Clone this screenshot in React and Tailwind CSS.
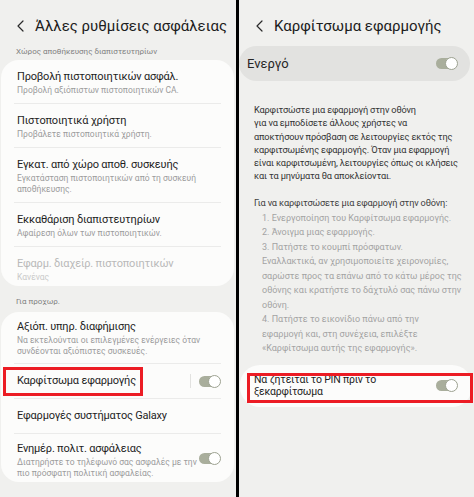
import React from 'react';

const Chevron = () => (
  <svg width="7" height="12" viewBox="0 0 7 12" fill="none">
    <path d="M6 1 L1 6 L6 11" stroke="#2a2a2a" strokeWidth="1.2" strokeLinecap="round" strokeLinejoin="round" />
  </svg>
);

const Toggle = () => (
  <div className="relative w-[22px] h-[13px] shrink-0">
    <div className="absolute left-0 top-[1px] w-[20px] h-[11px] rounded-full bg-[#a9ae9c]" />
    <div className="absolute right-0 top-0 w-[13px] h-[13px] rounded-full bg-white border border-[#9da291]" />
  </div>
);

const Item = ({ title, sub, disabled, pt = 'pt-[10px]', pb = 'pb-[7px]' }) => (
  <div className={`px-[16px] ${pt} ${pb} whitespace-nowrap`}>
    <div className={`text-[11px] tracking-[-0.2px] leading-[14px] ${disabled ? 'text-[#b9b9b9]' : 'text-[#1e1e1e]'}`}>{title}</div>
    {sub && (
      <div className={`mt-[1px] text-[8.5px] leading-[11px] ${disabled ? 'text-[#cacaca]' : 'text-[#9b9b9b]'}`}>{sub}</div>
    )}
  </div>
);

const Divider = () => <div className="mx-[13px] h-px bg-[#ebebea]" />;

export default function App() {
  return (
    <div className="w-[474px] h-[497px] flex bg-black font-['Roboto',sans-serif] overflow-hidden">

      {/* LEFT PANEL */}
      <div className="w-[236px] h-full bg-[#f0f0ee] flex flex-col">
        <div className="flex items-center h-[20px] mt-[16px] pl-[17px]">
          <Chevron />
          <span className="ml-[11px] text-[15px] leading-[20px] text-[#1c1c1c]">Άλλες ρυθμίσεις ασφάλειας</span>
        </div>

        <div className="mt-[10px] pl-[16px] text-[8px] leading-[12px] text-[#7f7f7f]">
          Χώρος αποθήκευσης διαπιστευτηρίων
        </div>

        <div className="mt-[2px] ml-[1px] mr-[2px] bg-[#fcfcfb] rounded-[18px]">
          <Item title="Προβολή πιστοποιητικών ασφάλ." sub="Προβολή αξιόπιστων πιστοποιητικών CA." />
          <Divider />
          <Item title="Πιστοποιητικά χρήστη" sub="Προβάλετε πιστοποιητικά χρήστη." />
          <Divider />
          <Item
            title="Εγκατ. από χώρο αποθ. συσκευής"
            sub={<>Εγκατάσταση πιστοποιητικών από τη συσκευή<br />αποθήκευσης.</>}
          />
          <Divider />
          <Item title="Εκκαθάριση διαπιστευτηρίων" sub="Αφαίρεση όλων των πιστοποιητικών." />
          <Divider />
          <Item title="Εφαρμ. διαχείρ. πιστοποιητικών" sub="Κανένας" disabled pb="pb-[3px]" />
        </div>

        <div className="mt-[10px] pl-[16px] text-[8px] leading-[12px] text-[#7f7f7f]">
          Για προχωρ.
        </div>

        <div className="mt-[4px] ml-[1px] mr-[2px] bg-[#fcfcfb] rounded-[18px]">
          <Item
            title="Αξιόπ. υπηρ. διαφήμισης"
            sub={<>Να εκτελούνται οι επιλεγμένες ενέργειες όταν<br />συνδέονται αξιόπιστες συσκευές.</>}
            pt="pt-[8px]"
            pb="pb-[6px]"
          />
          <Divider />
          <div className="relative flex items-center px-[16px] h-[34px]">
            <span className="flex-1 text-[11px] tracking-[-0.2px] leading-[14px] text-[#1e1e1e]">Καρφίτσωμα εφαρμογής</span>
            <div className="w-px h-[14px] bg-[#e2e2e0] mr-[8px]" />
            <div className="mr-[-3px]"><Toggle /></div>
            <div className="absolute left-[2px] top-[3px] w-[140px] h-[29px] border-[3px] border-[#ec1c24]" />
          </div>
          <Divider />
          <div className="flex items-center px-[16px] h-[34px]">
            <span className="text-[11px] tracking-[-0.2px] leading-[14px] text-[#1e1e1e]">Εφαρμογές συστήματος Galaxy</span>
          </div>
          <Divider />
          <div className="flex items-center pr-[13px]">
            <div className="flex-1 min-w-0">
              <Item
                title="Ενημέρ. πολιτ. ασφάλειας"
                sub={<>Διατηρήστε το τηλέφωνό σας ασφαλές με την<br />πιο πρόσφατη πολιτική ασφαλείας.</>}
                pt="pt-[8px]"
                pb="pb-[3px]"
              />
            </div>
            <Toggle />
          </div>
        </div>
      </div>

      {/* BLACK SEPARATOR */}
      <div className="w-[3px] h-full bg-black" />

      {/* RIGHT PANEL */}
      <div className="w-[235px] h-full bg-[#f0f0ee] flex flex-col">
        <div className="flex items-center h-[20px] mt-[16px] pl-[17px]">
          <Chevron />
          <span className="ml-[11px] text-[15px] leading-[20px] text-[#1c1c1c]">Καρφίτσωμα εφαρμογής</span>
        </div>

        <div className="mt-[10px] mr-[4px] h-[35px] rounded-full bg-[#e2e2e0] flex items-center pl-[8px] pr-[12px]">
          <span className="flex-1 text-[13px] text-[#262626]">Ενεργό</span>
          <Toggle />
        </div>

        <div className="mt-[22px] pl-[15px] text-[9.2px] tracking-[-0.15px] leading-[13.3px] text-[#333333] whitespace-nowrap">
          Καρφιτσώστε μια εφαρμογή στην οθόνη<br />
          για να εμποδίσετε άλλους χρήστες να<br />
          αποκτήσουν πρόσβαση σε λειτουργίες εκτός της<br />
          καρφιτσωμένης εφαρμογής. Όταν μια εφαρμογή<br />
          είναι καρφιτσωμένη, λειτουργίες όπως οι κλήσεις<br />
          και τα μηνύματα θα αποκλείονται.
        </div>

        <div className="mt-[13.5px] pl-[15px] text-[9.2px] tracking-[-0.15px] leading-[13.3px] text-[#404040] whitespace-nowrap">
          Για να καρφιτσώσετε μια εφαρμογή στην οθόνη:
        </div>

        <div className="mt-[1px] pl-[23px] text-[9px] leading-[14.5px] text-[#a3a3a3] whitespace-nowrap">
          1. Ενεργοποίηση του Καρφίτσωμα εφαρμογής.<br />
          2. Άνοιγμα μιας εφαρμογής.<br />
          3. Πατήστε το κουμπί πρόσφατων.<br />
          Εναλλακτικά, αν χρησιμοποιείτε χειρονομίες,<br />
          σαρώστε προς τα επάνω από το κάτω μέρος της<br />
          οθόνης και κρατήστε το δάχτυλό σας πάνω στην<br />
          οθόνη.<br />
          4. Πατήστε το εικονίδιο πάνω από την<br />
          εφαρμογή και, στη συνέχεια, επιλέξτε<br />
          «Καρφίτσωμα αυτής της εφαρμογής».
        </div>

        <div className="relative mt-[9px] ml-[1px] mr-[2px] h-[42px] rounded-[20px] bg-[#fcfcfb] flex items-center pl-[14px] pr-[14px]">
          <span className="flex-1 text-[10.5px] tracking-[-0.2px] leading-[12px] text-[#1e1e1e]">
            Να ζητείται το PIN πριν το<br />ξεκαρφίτσωμα
          </span>
          <Toggle />
          <div className="absolute left-[7px] top-[8px] w-[226px] h-[30px] border-[3px] border-[#ec1c24]" />
        </div>
      </div>
    </div>
  );
}
